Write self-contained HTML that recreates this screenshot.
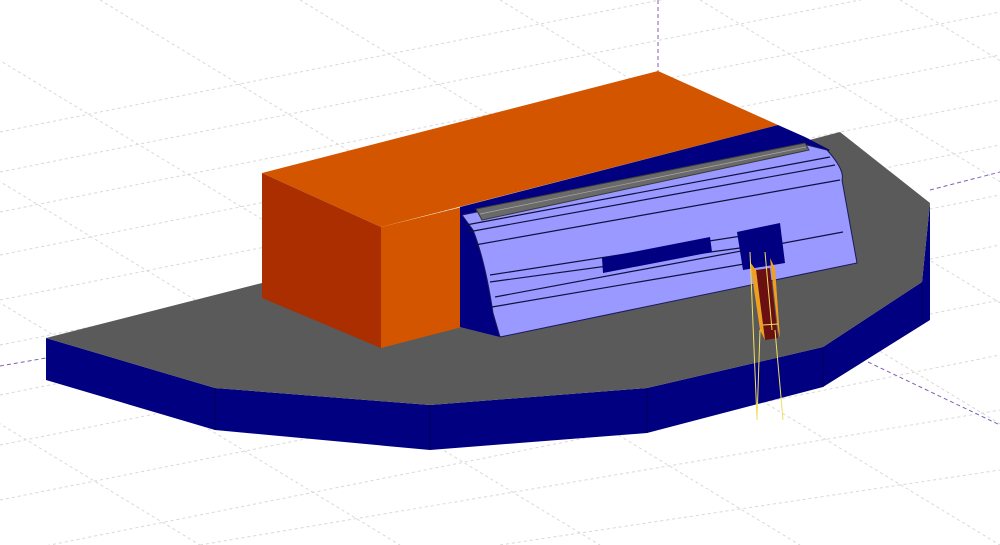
<!DOCTYPE html>
<html><head><style>html,body{margin:0;padding:0;background:#fff;overflow:hidden;width:1000px;height:545px}svg{display:block}</style></head>
<body>
<svg width="1000" height="545" viewBox="0 0 1000 545" xmlns="http://www.w3.org/2000/svg">
<g stroke="#d8d8d8" stroke-width="1" stroke-dasharray="3,3" fill="none">
<line x1="0" y1="132" x2="1000" y2="-68"/>
<line x1="0" y1="172" x2="1000" y2="-28"/>
<line x1="0" y1="212" x2="1000" y2="12"/>
<line x1="0" y1="255" x2="1000" y2="55"/>
<line x1="0" y1="300" x2="1000" y2="100"/>
<line x1="0" y1="345" x2="1000" y2="145"/>
<line x1="0" y1="395" x2="1000" y2="195"/>
<line x1="0" y1="445" x2="1000" y2="245"/>
<line x1="0" y1="500" x2="1000" y2="300"/>
<line x1="0" y1="555" x2="1000" y2="355"/>
<line x1="200" y1="545" x2="1000" y2="410"/>
<line x1="500" y1="545" x2="1000" y2="470"/>
<line x1="-300" y1="0" x2="600" y2="545"/>
<line x1="-100" y1="0" x2="800" y2="545"/>
<line x1="100" y1="0" x2="1000" y2="545"/>
<line x1="300" y1="0" x2="1200" y2="545"/>
<line x1="500" y1="0" x2="1400" y2="545"/>
<line x1="700" y1="0" x2="1600" y2="545"/>
<line x1="900" y1="0" x2="1800" y2="545"/>
<line x1="-500" y1="0" x2="400" y2="545"/>
<line x1="-700" y1="0" x2="200" y2="545"/>
</g>
<g stroke="#8060b0" stroke-width="1" stroke-dasharray="4,3" fill="none">
<line x1="658" y1="0" x2="658" y2="71"/>
<line x1="930" y1="190" x2="1000" y2="172"/>
<line x1="0" y1="366" x2="46" y2="358"/>
<line x1="868" y1="362" x2="1000" y2="425"/>
</g>
<polygon fill="#000080" points="46,338 215,388 430,405 647,388 823,347 922,282 930,203 930,320 823,387 647,433 430,450 215,430 46,380"/>
<g stroke="#00005a" stroke-width="1"><line x1="215" y1="388" x2="215" y2="430"/><line x1="430" y1="405" x2="430" y2="450"/><line x1="647" y1="388" x2="647" y2="433"/><line x1="823" y1="347" x2="823" y2="387"/><line x1="922" y1="282" x2="922" y2="322"/></g>
<polygon fill="#5a5a5a" points="46,338 262,283 840,132 930,203 922,282 823,347 647,388 430,405 215,388"/>
<polygon fill="#d45500" points="262,173 658,71 778,125 381,227"/>
<polygon fill="#aa2e00" points="262,173 381,227 381,348 262,298"/>
<polygon fill="#d45500" points="381,227 462,207 462,327 381,348"/>
<polygon fill="#000080" points="460,207 778,125 805,137 830,150 500,337 460,327"/>
<path fill="#9999ff" stroke="#1a1a5a" stroke-width="1" d="M462,215 L807,145 L827,150 Q845,170 842,180 L857,263 L500,337 Q495,320 493,313 Q485,260 473,230 Z"/>
<g stroke="#101040" stroke-width="1.2" fill="none">
<line x1="466" y1="225" x2="830" y2="157"/>
<line x1="468" y1="232" x2="835" y2="165"/>
<line x1="475" y1="245" x2="840" y2="180"/>
<line x1="490" y1="275" x2="748" y2="235"/>
<line x1="490" y1="282" x2="740" y2="248"/>
<line x1="495" y1="297" x2="843" y2="232"/>
<line x1="492" y1="307" x2="750" y2="263"/>
</g>
<polygon fill="#000080" points="602,258 710,237 712,252 603,273"/>
<polygon fill="#000080" points="737,232 780,223 785,263 743,270"/>
<polygon fill="#6a6a6a" stroke="#3a3a3a" stroke-width="1" points="476,209 805,143 809,150 482,220"/>
<line x1="480" y1="214" x2="806" y2="147" stroke="#aaa" stroke-width="0.7"/>
<polygon fill="#6b1010" points="756,270 770,268 778,338 765,340"/>
<polygon fill="#f0a020" points="750,262 756,270 765,340 760,330"/>
<polygon fill="#f0a020" points="770,258 775,268 780,338 778,330"/>
<g stroke="#f0e060" stroke-width="1" fill="none">
<line x1="750" y1="252" x2="757" y2="420"/>
<line x1="765" y1="252" x2="772" y2="330"/>
<line x1="775" y1="330" x2="783" y2="420"/>
<line x1="760" y1="330" x2="757" y2="420"/>
<line x1="763" y1="325" x2="778" y2="324"/>
</g>
</svg>
</body></html>
